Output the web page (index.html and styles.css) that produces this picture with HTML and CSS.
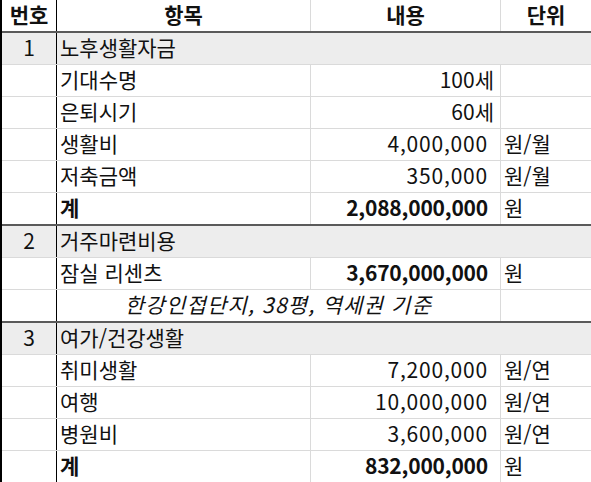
FILE: index.html
```html
<!DOCTYPE html>
<html lang="ko">
<head>
<meta charset="utf-8">
<title>노후 자금 계획</title>
<link rel="stylesheet" href="styles.css">
</head>
<body>
<div class="sheet">
  <div class="row head">
    <div class="c no">번호</div>
    <div class="c item">항목</div>
    <div class="c val">내용</div>
    <div class="c unit">단위</div>
  </div>

  <div class="row grp">
    <div class="c no">1</div>
    <div class="c title">노후생활자금</div>
  </div>
  <div class="row">
    <div class="c no"></div>
    <div class="c item">기대수명</div>
    <div class="c val"><span class="age">100세</span></div>
    <div class="c unit"></div>
  </div>
  <div class="row">
    <div class="c no"></div>
    <div class="c item">은퇴시기</div>
    <div class="c val"><span class="age">60세</span></div>
    <div class="c unit"></div>
  </div>
  <div class="row">
    <div class="c no"></div>
    <div class="c item">생활비</div>
    <div class="c val"><span class="num">4,000,000</span></div>
    <div class="c unit">원/월</div>
  </div>
  <div class="row">
    <div class="c no"></div>
    <div class="c item">저축금액</div>
    <div class="c val"><span class="num">350,000</span></div>
    <div class="c unit">원/월</div>
  </div>
  <div class="row end">
    <div class="c no"></div>
    <div class="c item strong">계</div>
    <div class="c val"><span class="num strong">2,088,000,000</span></div>
    <div class="c unit">원</div>
  </div>

  <div class="row grp">
    <div class="c no">2</div>
    <div class="c title">거주마련비용</div>
  </div>
  <div class="row">
    <div class="c no"></div>
    <div class="c item">잠실 리센츠</div>
    <div class="c val"><span class="num strong">3,670,000,000</span></div>
    <div class="c unit">원</div>
  </div>
  <div class="row end">
    <div class="c no"></div>
    <div class="c note">한강인접단지, 38평, 역세권 기준</div>
    <div class="c unit"></div>
  </div>

  <div class="row grp">
    <div class="c no">3</div>
    <div class="c title">여가/건강생활</div>
  </div>
  <div class="row">
    <div class="c no"></div>
    <div class="c item">취미생활</div>
    <div class="c val"><span class="num">7,200,000</span></div>
    <div class="c unit">원/연</div>
  </div>
  <div class="row">
    <div class="c no"></div>
    <div class="c item">여행</div>
    <div class="c val"><span class="num">10,000,000</span></div>
    <div class="c unit">원/연</div>
  </div>
  <div class="row">
    <div class="c no"></div>
    <div class="c item">병원비</div>
    <div class="c val"><span class="num">3,600,000</span></div>
    <div class="c unit">원/연</div>
  </div>
  <div class="row">
    <div class="c no"></div>
    <div class="c item strong">계</div>
    <div class="c val"><span class="num strong">832,000,000</span></div>
    <div class="c unit">원</div>
  </div>
</div>
</body>
</html>
```

FILE: styles.css
```css
* { box-sizing: border-box; }

html, body {
  margin: 0;
  padding: 0;
  background: #ffffff;
}

body {
  font-family: "Noto Sans CJK KR", "Noto Sans", sans-serif;
  font-size: 21px;
  color: #111;
}

.sheet {
  width: 591px;
  border-left: 2px solid #000;
  overflow: hidden;
}

.row {
  display: grid;
  grid-template-columns: 55px 254px 190px 1fr;
  height: 32px;
  border-bottom: 1px solid #dadada;
}

.row.head,
.row.end {
  height: 33px;
  border-bottom: 2px solid #5a5a5a;
}

.row.grp {
  background: #ededed;
}

.c {
  display: flex;
  align-items: center;
  line-height: 1;
  white-space: nowrap;
  padding-bottom: 2px;
}

.no {
  justify-content: center;
  border-right: 1px solid #000;
}

.item {
  padding-left: 3px;
  border-right: 1px solid #dadada;
}

.val {
  justify-content: flex-end;
  border-right: 1px solid #dadada;
}

.unit {
  padding-left: 3px;
}

.head .c {
  justify-content: center;
  font-weight: bold;
  padding-left: 0;
}

.title {
  grid-column: 2 / 5;
  padding-left: 3px;
}

.note {
  grid-column: 2 / 4;
  justify-content: center;
  font-style: italic;
  letter-spacing: 1.2px;
  border-right: 1px solid #dadada;
}

.num {
  padding-right: 12px;
  letter-spacing: 0.8px;
}
.age { padding-right: 6px; }

.strong { font-weight: bold; }
.num.strong { letter-spacing: -0.2px; }
```
